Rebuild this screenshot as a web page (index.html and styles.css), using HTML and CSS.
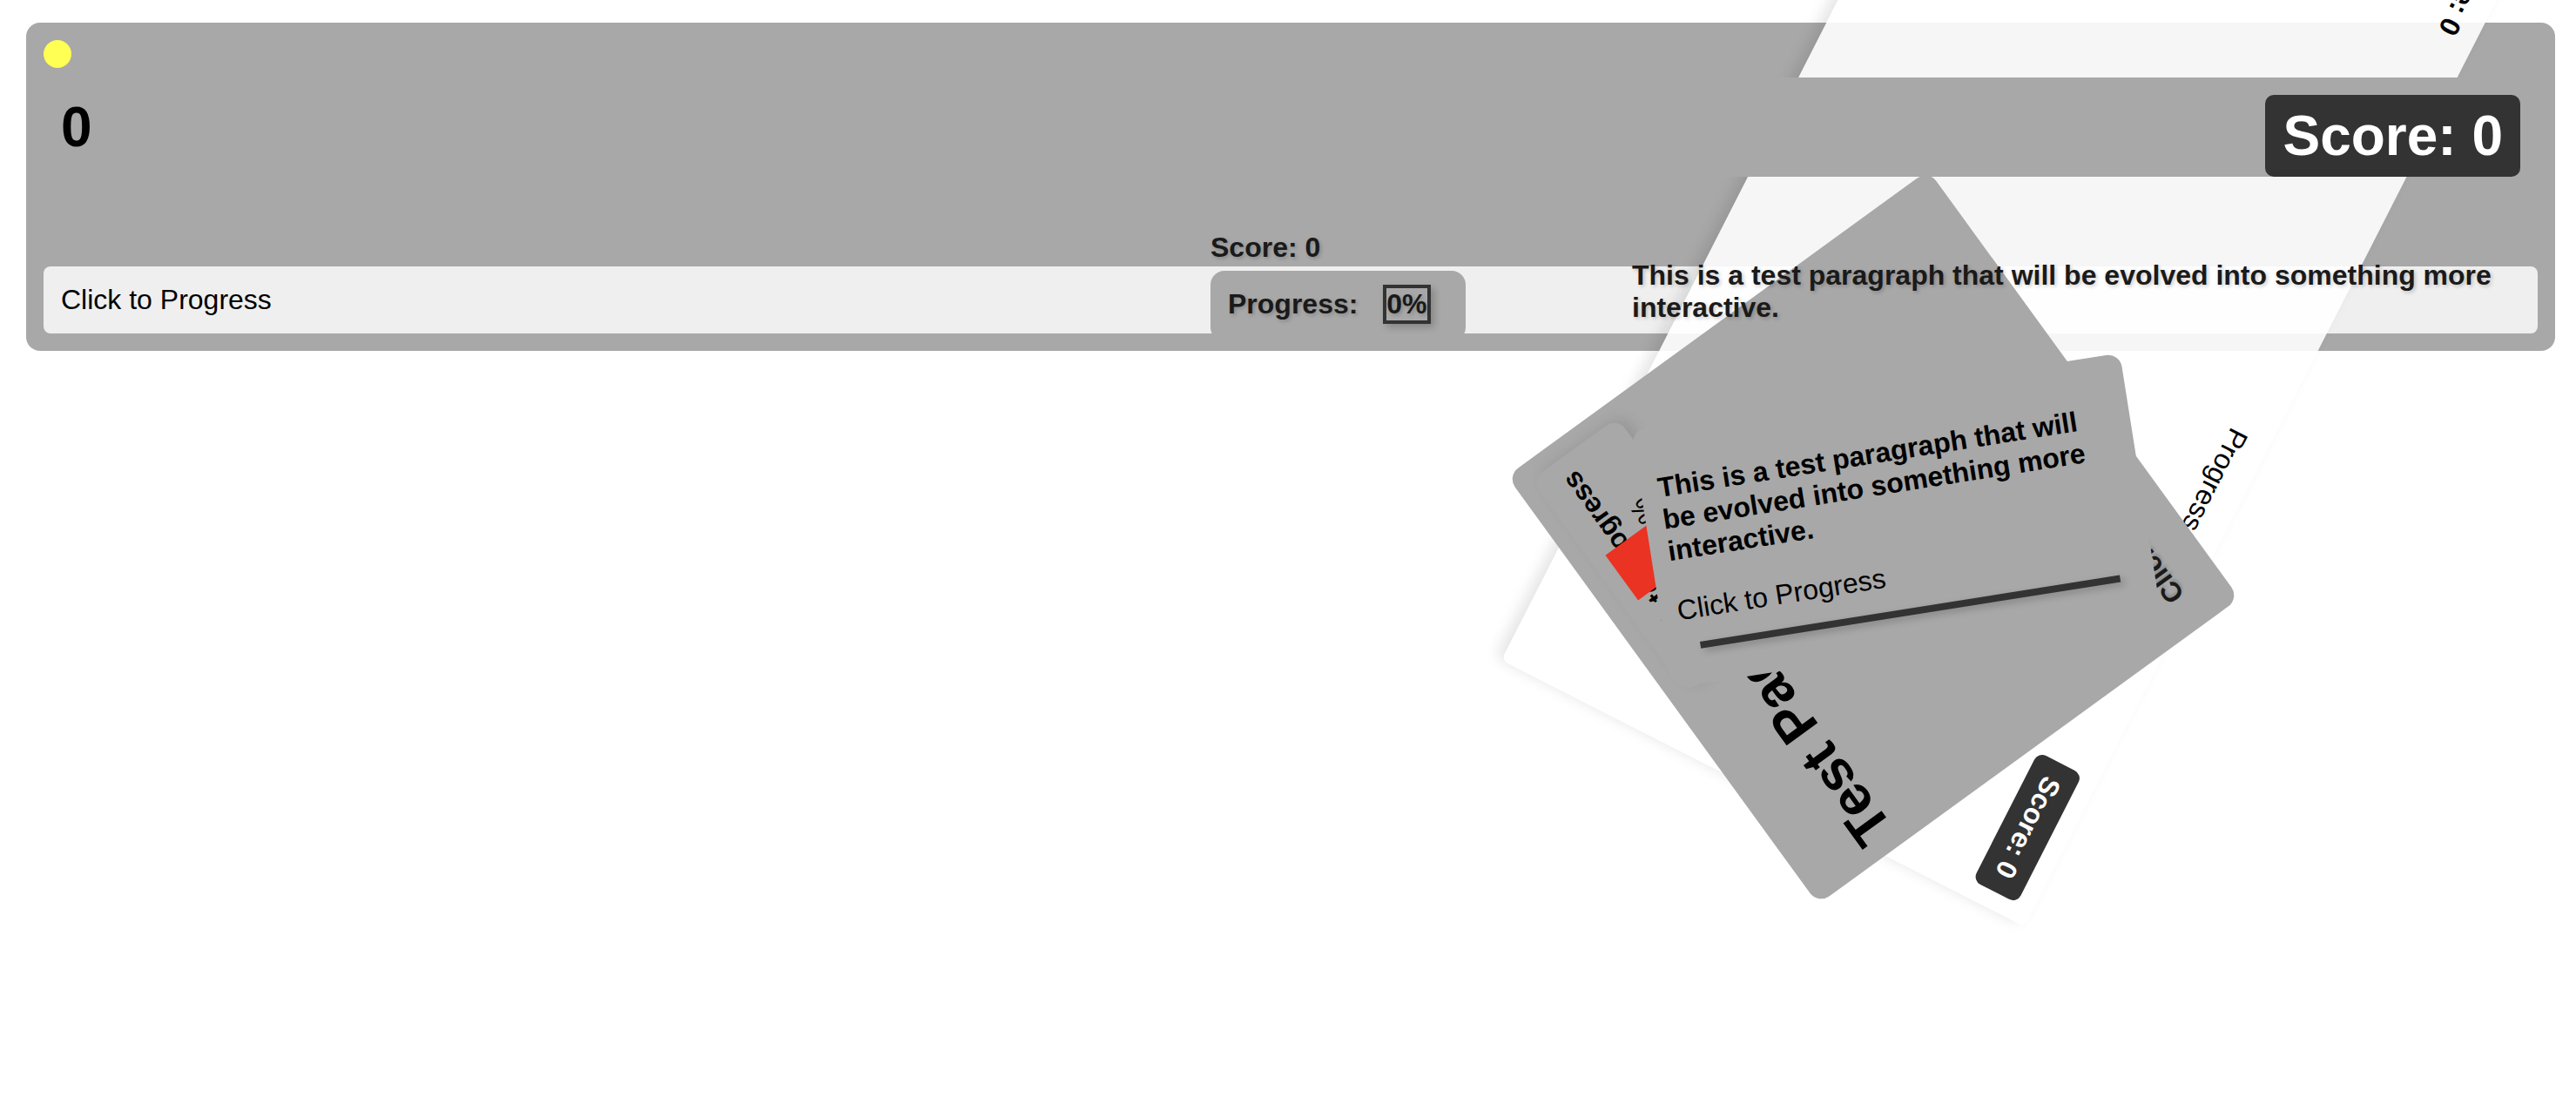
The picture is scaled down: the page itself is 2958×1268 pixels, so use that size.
FILE: index.html
```html
<!DOCTYPE html>
<html lang="en">
<head>
<meta charset="utf-8">
<title>Test Page</title>
<link rel="stylesheet" href="styles.css">
</head>
<body>
<main class="board">
  <div class="dot"></div>
  <header class="board-header">
    <h1 class="counter">0</h1>
    <div class="badge badge-large">Score: 0</div>
  </header>
  <button class="progress-button" type="button">Click to Progress</button>

  <div class="status">
    <p class="status-score">Score: 0</p>
    <p class="status-progress">Progress: <span class="percent">0%</span></p>
  </div>
  <p class="intro">This is a test paragraph that will be evolved into something more interactive.</p>
</main>

<section class="card card-light">
  <strong class="light-score">Score: 0</strong>
  <span class="light-progress">Progress:</span>
  <div class="badge">Score: 0</div>
</section>

<section class="card card-title">
  <h2 class="title">Test Page</h2>
  <div class="tile">
    <strong>Click to Progress</strong>
    <span class="tile-percent">0%</span>
    <div class="marker"></div>
  </div>
  <button class="title-button" type="button">Click to Progress</button>
</section>

<section class="card card-text">
  <p class="card-copy">This is a test paragraph that will be evolved into something more interactive.</p>
  <button class="text-button" type="button">Click to Progress</button>
  <div class="rule"></div>
</section>
</body>
</html>
```
FILE: styles.css
```css
* { box-sizing: border-box; }

body {
  position: relative;
  min-height: 100vh;
  margin: 0;
  padding: 26px 24px 0 30px;
  overflow: hidden;
  background: #fff;
  color: #000;
  font: 32px/37px "Liberation Sans", Arial, sans-serif;
}

h1, h2, p { margin: 0; }

button {
  margin: 0;
  padding: 0;
  border: 0;
  background: none;
  color: inherit;
  font: inherit;
  text-align: left;
  cursor: pointer;
}

/* Main board */
.board {
  position: relative;
  display: flex;
  flex-direction: column;
  padding: 20px;
  border-radius: 16px;
  background: #a8a8a8;
}

.dot {
  width: 32px;
  height: 32px;
  border-radius: 50%;
  background: #ffff54;
}

.board-header {
  position: relative;
  z-index: 3;
  display: flex;
  justify-content: space-between;
  align-items: flex-start;
  margin: 11px 0 103px;
  padding: 20px 20px 0;
  background: #a8a8a8;
}

.counter {
  font-size: 64px;
  line-height: 74px;
}

.badge {
  padding: 10px 20px;
  border-radius: 10px;
  background: #333;
  color: #fff;
  font-weight: bold;
}

.badge-large {
  font-size: 64px;
  line-height: 74px;
}

.progress-button {
  padding: 20px;
  border-radius: 8px;
  background: #efefef;
}

.status,
.intro {
  position: absolute;
  z-index: 5;
  color: #1a1a1a;
  font-weight: bold;
  text-shadow: 2px 2px 4px rgba(0, 0, 0, 0.2);
}

.status {
  top: 240px;
  left: 1360px;
}

.status-progress {
  margin-top: 8px;
  padding: 16px 20px 20px;
  border-radius: 16px;
  background: #a8a8a8;
}

.percent {
  display: inline-block;
  margin: 0 20px;
  border: 4px solid #333;
  box-shadow: 4px 4px 8px rgba(0, 0, 0, 0.2);
}

.intro {
  top: 272px;
  right: 40px;
  width: 1020px;
}

/* Rotated cards */
.card {
  position: absolute;
  border-radius: 16px;
}

.card-light {
  z-index: 1;
  top: 4px;
  right: 3px;
  display: flex;
  align-items: flex-start;
  width: 1280px;
  height: 674px;
  padding: 20px;
  border-radius: 8px;
  background: rgba(255, 255, 255, 0.89);
  box-shadow: 0 8px 16px rgba(0, 0, 0, 0.1);
  transform: rotate(117deg);
}

.light-score {
  flex: 0 0 640px;
  margin-top: -4px;
}

.light-progress { flex: 1; }

.card-title {
  z-index: 2;
  top: 318px;
  right: 503px;
  display: flex;
  flex-wrap: wrap;
  align-content: space-between;
  width: 608px;
  height: 598px;
  padding: 20px;
  background: #a8a8a8;
  transform: rotate(234deg);
}

.title {
  flex: 1 0 0;
  width: 0;
  margin-top: 43px;
  font-size: 64px;
  line-height: 74px;
  white-space: nowrap;
}

.tile {
  position: relative;
  display: flex;
  flex-direction: column;
  padding: 20px;
  border-radius: 16px;
  background: #a8a8a8;
  box-shadow: 0 8px 16px rgba(0, 0, 0, 0.1);
}

.tile-percent {
  align-self: flex-end;
  padding: 8px 70px 0 0;
}

.marker {
  position: absolute;
  top: 18px;
  right: 120px;
  width: 64px;
  height: 74px;
  background: #ea3323;
}

.title-button {
  flex: 0 0 100%;
  padding: 20px;
  color: #1a1a1a;
  font-weight: bold;
  text-shadow: 2px 2px 4px rgba(0, 0, 0, 0.2);
}

.card-text {
  z-index: 4;
  top: 448px;
  right: 497px;
  display: flex;
  flex-direction: column;
  width: 568px;
  padding: 20px;
  background: #a8a8a8;
  transform: rotate(-9deg);
}

.card-copy {
  margin: 32px 0;
  font-weight: bold;
}

.rule {
  height: 8px;
  margin: 20px;
  background: #333;
  box-shadow: 4px 4px 8px rgba(0, 0, 0, 0.2);
}
```
